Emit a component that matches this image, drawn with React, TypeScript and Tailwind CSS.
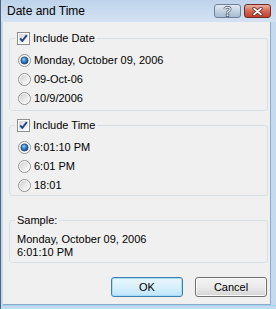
import React from 'react'

function CheckBox({ id }: { id: string }) {
  return (
    <svg width="13" height="13" viewBox="0 0 13 13" className="shrink-0">
      <defs>
        <linearGradient id={id} x1="0" y1="0" x2="1" y2="1">
          <stop offset="0" stopColor="#d6d6d6" />
          <stop offset="1" stopColor="#fcfcfc" />
        </linearGradient>
      </defs>
      <rect x="0.5" y="0.5" width="12" height="12" fill="#fff" stroke="#8e8f8f" />
      <rect x="2" y="2" width="9" height="9" fill={`url(#${id})`} />
      <path d="M3.2 6.3 L5.3 9 L9.8 3.2" fill="none" stroke="#21418c" strokeWidth="1.9" strokeLinejoin="round" />
    </svg>
  )
}

function Radio({ id, checked }: { id: string; checked?: boolean }) {
  return (
    <svg width="13" height="13" viewBox="0 0 13 13" className="shrink-0">
      <defs>
        <linearGradient id={`${id}f`} x1="0" y1="0" x2="1" y2="1">
          <stop offset="0" stopColor="#d0d0d0" />
          <stop offset="1" stopColor="#fdfdfd" />
        </linearGradient>
        <radialGradient id={`${id}d`} cx="0.4" cy="0.35" r="0.7">
          <stop offset="0" stopColor="#8fd2fb" />
          <stop offset="0.5" stopColor="#2c7fc8" />
          <stop offset="1" stopColor="#15437a" />
        </radialGradient>
      </defs>
      <circle cx="6.5" cy="6.5" r="6" fill="#fff" stroke="#8c8e91" />
      <circle cx="6.5" cy="6.5" r="4.6" fill={`url(#${id}f)`} />
      {checked && <circle cx="6.5" cy="6.5" r="3.6" fill={`url(#${id}d)`} stroke="#1a3f6c" strokeWidth="0.7" />}
    </svg>
  )
}

function Option({ id, label, checked }: { id: string; label: string; checked?: boolean }) {
  return (
    <div className="h-[19px] flex items-center gap-[3px] pl-[3px]">
      <Radio id={id} checked={checked} />
      <span>{label}</span>
    </div>
  )
}

function TitleButton({ kind }: { kind: 'help' | 'close' }) {
  const isClose = kind === 'close'
  return (
    <div
      className={
        isClose
          ? 'w-[27px] h-[14px] rounded-[3px] border border-[#6e2c24] bg-gradient-to-b from-[#e9b1a5] via-[#d46654] to-[#c2412f] flex items-center justify-center'
          : 'w-[27px] h-[14px] rounded-[3px] border border-[#6f8197] bg-gradient-to-b from-[#e3ebf4] via-[#c3d2e3] to-[#a8bbd2] flex items-center justify-center'
      }
    >
      {isClose ? (
        <svg width="11" height="9" viewBox="0 0 11 9">
          <path d="M2 1.5 L9 7.5 M9 1.5 L2 7.5" stroke="#5a1f18" strokeWidth="3.2" strokeLinecap="round" />
          <path d="M2 1.5 L9 7.5 M9 1.5 L2 7.5" stroke="#ffffff" strokeWidth="1.7" strokeLinecap="round" />
        </svg>
      ) : (
        <svg width="9" height="11" viewBox="0 0 9 11">
          <path d="M1.8 3.2 C1.8 0.6 7.2 0.6 7.2 3.2 C7.2 5 4.5 4.8 4.5 7" fill="none" stroke="#4b5b70" strokeWidth="2.6" />
          <path d="M1.8 3.2 C1.8 0.6 7.2 0.6 7.2 3.2 C7.2 5 4.5 4.8 4.5 7" fill="none" stroke="#ffffff" strokeWidth="1.2" />
          <rect x="3.2" y="8" width="2.6" height="2.6" fill="#ffffff" stroke="#4b5b70" strokeWidth="0.8" />
        </svg>
      )}
    </div>
  )
}

export default function App() {
  return (
    <div className="w-[276px] h-[309px] flex flex-col overflow-hidden bg-[#c6daef] border-l border-[#52657c] font-['Liberation_Sans',Arial,sans-serif] text-[11px] text-black">
      <div className="h-[22px] shrink-0 flex items-center justify-between pl-[6px] pr-[5px] bg-gradient-to-b from-[#bed3ea] to-[#d3e2f3]">
        <span className="text-[12px]">Date and Time</span>
        <div className="flex gap-[3px]">
          <TitleButton kind="help" />
          <TitleButton kind="close" />
        </div>
      </div>

      <div className="flex-1 ml-[2px] mr-[5px] bg-[#f0f0f0] border-r border-b border-[#8eaacb] pt-[9px] pl-[6px] pr-[2px]">
        <fieldset className="border border-[#d5dfe5] rounded-[3px] px-[5px] pt-[6px] pb-[2px]">
          <legend className="px-[2px] h-[14px] flex items-center gap-[3px]">
            <CheckBox id="cb1" />
            <span>Include Date</span>
          </legend>
          <Option id="r1" label="Monday, October 09, 2006" checked />
          <Option id="r2" label="09-Oct-06" />
          <Option id="r3" label="10/9/2006" />
        </fieldset>

        <fieldset className="mt-[7px] border border-[#d5dfe5] rounded-[3px] px-[5px] pt-[6px]">
          <legend className="px-[2px] h-[14px] flex items-center gap-[3px]">
            <CheckBox id="cb2" />
            <span>Include Time</span>
          </legend>
          <Option id="r4" label="6:01:10 PM" checked />
          <Option id="r5" label="6:01 PM" />
          <Option id="r6" label="18:01" />
        </fieldset>

        <fieldset className="mt-[18px] border border-[#d5dfe5] rounded-[3px] px-[5px] pt-[6px] pb-[3px]">
          <legend className="px-[2px] h-[13px] leading-[13px]">Sample:</legend>
          <div className="pl-[2px] leading-[13px]">
            <div>Monday, October 09, 2006</div>
            <div>6:01:10 PM</div>
          </div>
        </fieldset>

        <div className="mt-[14px] flex justify-end gap-[12px] pr-[1px]">
          <button className="w-[72px] h-[20px] rounded-[3px] border border-[#3c7fb1] bg-gradient-to-b from-[#eaf6fd] via-[#d9f0fc] to-[#bee6fd] shadow-[inset_0_0_0_1px_#a8dcf6]">
            OK
          </button>
          <button className="w-[72px] h-[20px] rounded-[3px] border border-[#707070] bg-gradient-to-b from-[#f2f2f2] via-[#ebebeb] to-[#d4d4d4] shadow-[inset_0_0_0_1px_#fbfbfb]">
            Cancel
          </button>
        </div>
      </div>
      <div className="h-[4px] shrink-0 border-t border-[#9fd6f2]" />
    </div>
  )
}
